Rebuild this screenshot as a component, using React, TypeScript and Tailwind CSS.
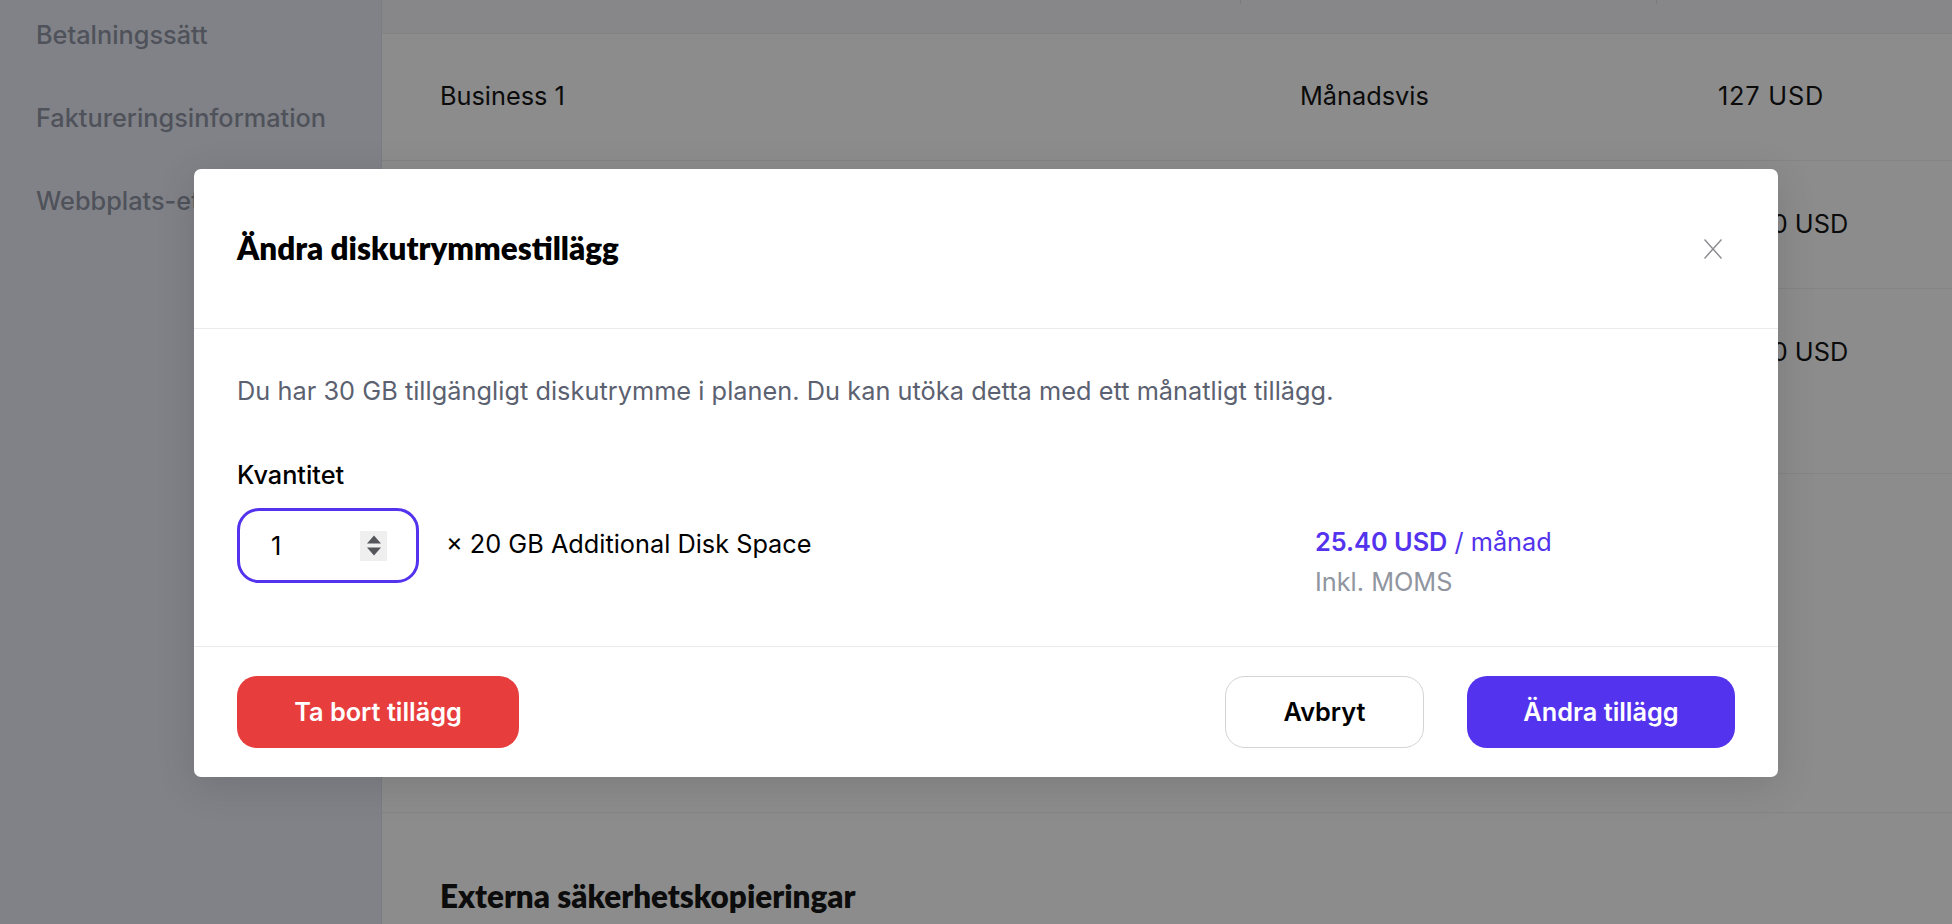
const rows = [
  { name: 'Business 1', period: 'Månadsvis', price: '127 USD', rowClass: 'h-[127px] items-center pb-[3px]', priceClass: 'tracking-[0.8px]' },
  { name: 'Disk Space', period: 'Månadsvis', price: '25.40 USD', rowClass: 'h-[128px] items-center pb-[2px]', priceClass: '' },
  { name: 'Backup', period: 'Månadsvis', price: '25.40 USD', rowClass: 'h-[185px] items-start pt-[44px]', priceClass: '' },
]

const navItems = ['Betalningssätt', 'Faktureringsinformation', 'Webbplats-etiketter']

function Background() {
  return (
    <div className="flex h-[924px] w-full overflow-hidden bg-[#8c8c8c] font-['Inter',sans-serif] text-[25.3px] text-[#0b0b0b]">
      <aside className="w-[382px] shrink-0 border-r border-[#7c7d82] bg-[#818287] pl-[36px] pt-[17px]">
        <ul className="flex flex-col gap-[47px] leading-[36px] font-medium text-[#4f525a]">
          {navItems.map((item) => (
            <li key={item}>{item}</li>
          ))}
        </ul>
      </aside>

      <main className="min-w-0 flex-1">
        <div className="flex h-[34px] items-start border-b border-[#838386] bg-[#87878a]">
          <div className="ml-[858px] h-[4px] w-px bg-[#7b7b7e]" />
          <div className="ml-[415px] h-[4px] w-px bg-[#7b7b7e]" />
        </div>
        {rows.map((row) => (
          <div key={row.name} className={`flex border-b border-[#848486] pl-[58px] ${row.rowClass}`}>
            <span className="w-[860px] shrink-0">{row.name}</span>
            <span className="w-[418px] shrink-0">{row.period}</span>
            <span className={row.priceClass}>{row.price}</span>
          </div>
        ))}
        <div className="h-[339px] border-b border-[#848486]" />
        <h2 className="pl-[58px] pt-[65px] font-['Lato',sans-serif] text-[31.4px] leading-[36px] font-extrabold text-[#0c0c0c]">
          Externa säkerhetskopieringar
        </h2>
      </main>
    </div>
  )
}

function Spinner() {
  return (
    <div className="flex h-[30px] w-[27px] flex-col items-center justify-center gap-[3px] bg-[#efefef]">
      <svg width="16" height="9" viewBox="0 0 16 9" fill="#54565b">
        <path d="M8 0.5 15 8.5 1 8.5Z" />
      </svg>
      <svg width="16" height="9" viewBox="0 0 16 9" fill="#54565b">
        <path d="M1 0.5 15 0.5 8 8.5Z" />
      </svg>
    </div>
  )
}

function Modal() {
  return (
    <div className="w-[1584px] overflow-hidden rounded-[7px] bg-white font-['Inter',sans-serif] text-[25.3px] text-black shadow-[0_8px_40px_rgba(0,0,0,0.12)]">
      <header className="flex h-[160px] items-center justify-between border-b border-[#ebebef] pl-[43px] pr-[56px]">
        <h2 className="font-['Lato',sans-serif] text-[31.4px] font-extrabold">Ändra diskutrymmestillägg</h2>
        <svg width="18" height="20" viewBox="0 0 18 20" fill="none" stroke="#8d8d92" strokeWidth="1.5" className="mt-[1px]">
          <path d="M0.5 0.5 17.5 19.5M17.5 0.5 0.5 19.5" />
        </svg>
      </header>

      <section className="h-[318px] border-b border-[#ebebef] px-[43px] pt-[46px]">
        <p className="leading-[32px] tracking-[0.04px] text-[#5b6170]">
          Du har 30 GB tillgängligt diskutrymme i planen. Du kan utöka detta med ett månatligt tillägg.
        </p>
        <label className="mt-[52px] block leading-[32px] font-medium">Kvantitet</label>
        <div className="mt-[17px] flex">
          <div className="flex h-[75px] w-[182px] items-center justify-between rounded-[22px] border-[3px] border-[#5333ed] pl-[30px] pr-[29px]">
            <span className="pl-[1px]">1</span>
            <Spinner />
          </div>
          <p className="ml-[27px] mt-[20px] w-[869px] leading-[32px]">× 20 GB Additional Disk Space</p>
          <div className="mt-[18px] leading-[32px]">
            <p className="text-[#5333ed]">
              <span className="font-semibold">25.40 USD</span> / månad
            </p>
            <p className="mt-[8px] text-[#9095a0]">Inkl. MOMS</p>
          </div>
        </div>
      </section>

      <footer className="flex h-[130px] items-center justify-between px-[43px] font-semibold">
        <button className="h-[72px] w-[282px] rounded-[20px] bg-[#e73d3d] text-white">Ta bort tillägg</button>
        <div className="flex gap-[43px]">
          <button className="h-[72px] w-[199px] rounded-[20px] border border-[#d4d4d8] bg-white">Avbryt</button>
          <button className="h-[72px] w-[268px] rounded-[20px] bg-[#5333ed] text-white">Ändra tillägg</button>
        </div>
      </footer>
    </div>
  )
}

export default function App() {
  return (
    <div className="relative h-[924px] w-full overflow-hidden">
      <Background />
      <div className="absolute inset-0 pl-[194px] pt-[169px]">
        <Modal />
      </div>
    </div>
  )
}
